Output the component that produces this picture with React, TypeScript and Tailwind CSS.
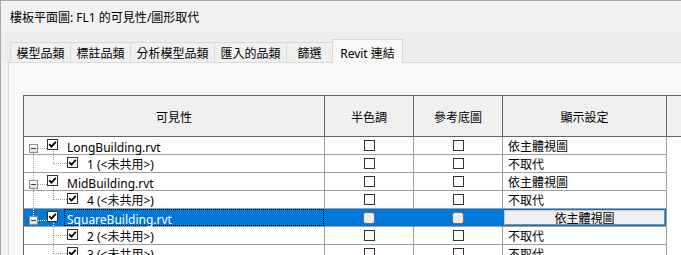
import React from 'react';

type Row = {
  kind: 'parent' | 'child';
  label: string;
  display: string;
  selected?: boolean;
  up?: boolean;
  down?: boolean;
  through?: boolean;
  last?: boolean;
};

const rows: Row[] = [
  { kind: 'parent', label: 'LongBuilding.rvt', display: '依主體視圖', down: true },
  { kind: 'child', label: '1 (<未共用>)', display: '不取代', through: true, last: true },
  { kind: 'parent', label: 'MidBuilding.rvt', display: '依主體視圖', up: true, down: true },
  { kind: 'child', label: '4 (<未共用>)', display: '不取代', through: true, last: true },
  { kind: 'parent', label: 'SquareBuilding.rvt', display: '依主體視圖', up: true, selected: true },
  { kind: 'child', label: '2 (<未共用>)', display: '不取代' },
  { kind: 'child', label: '3 (<未共用>)', display: '不取代' },
];

const tabs = [
  { label: '模型品類', w: 'w-[60px]' },
  { label: '標註品類', w: 'w-[60px]' },
  { label: '分析模型品類', w: 'w-[84px]' },
  { label: '匯入的品類', w: 'w-[72px]' },
  { label: '篩選', w: 'w-[46px]' },
];

const CJK_RUN = /([\u2E80-\u9FFF\uF900-\uFAFF\uFF00-\uFFEF]+)/;

// Latin runs in Noto Sans, CJK runs in Noto Sans CJK TC
const Txt: React.FC<{ s: string }> = ({ s }) => (
  <span className="whitespace-pre">
    {s
      .split(CJK_RUN)
      .filter(Boolean)
      .map((part, i) =>
        CJK_RUN.test(part) ? (
          <span key={i} className="font-['Noto_Sans_CJK_TC',sans-serif] text-[12px]">
            {part}
          </span>
        ) : (
          <span key={i} className="font-['Noto_Sans','Noto_Sans_CJK_TC',sans-serif] text-[12px]">
            {part}
          </span>
        )
      )}
  </span>
);

const CheckBox: React.FC<{ checked?: boolean }> = ({ checked }) => (
  <svg width="11" height="11" viewBox="0 0 11 11" className="shrink-0 block">
    <rect x="0.5" y="0.5" width="10" height="10" fill="#ffffff" stroke="#333333" />
    {checked && (
      <polyline points="2.2,5.2 4.4,7.6 8.8,2.8" fill="none" stroke="#000000" strokeWidth="1.8" />
    )}
  </svg>
);

const MinusBox: React.FC = () => (
  <svg width="9" height="9" viewBox="0 0 9 9" className="shrink-0 block">
    <defs>
      <linearGradient id="mb" x1="0" y1="0" x2="0" y2="1">
        <stop offset="0" stopColor="#ffffff" />
        <stop offset="1" stopColor="#dcdcdc" />
      </linearGradient>
    </defs>
    <rect x="0.5" y="0.5" width="8" height="8" fill="url(#mb)" stroke="#8e8e8e" />
    <line x1="2" y1="4.5" x2="7" y2="4.5" stroke="#2a3f5c" />
  </svg>
);

const TreeLines: React.FC<{ row: Row }> = ({ row }) => {
  const segs: [number, number, number, number][] = [];
  if (row.kind === 'parent') {
    if (row.up) segs.push([9.5, 0, 9.5, 7]);
    if (row.down) segs.push([9.5, 16, 9.5, 18]);
    segs.push([14, 11.5, 23, 11.5]);
    segs.push([29.5, 14, 29.5, 18]);
  } else {
    if (row.through) segs.push([9.5, 0, 9.5, 18]);
    segs.push([29.5, 0, 29.5, row.last ? 9 : 18]);
    segs.push([30, 8.5, 43, 8.5]);
  }
  const color = row.selected ? '#ffffff' : '#a0a0a0';
  return (
    <svg width="60" height="18" className="absolute left-0 top-0 pointer-events-none" shapeRendering="crispEdges">
      {segs.map(([x1, y1, x2, y2], i) => (
        <line key={i} x1={x1} y1={y1} x2={x2} y2={y2} stroke={color} strokeDasharray="1 1" />
      ))}
    </svg>
  );
};

const BodyRow: React.FC<{ row: Row }> = ({ row }) => {
  const sel = !!row.selected;
  const cellBg = sel ? 'bg-[#0078d7] border-r-[#0078d7]' : 'bg-white border-r-[#a0a0a0]';
  return (
    <div className="flex h-[18px] leading-[17px]">
      <div className={`relative w-[301px] flex items-start border-r border-b border-b-[#a0a0a0] ${cellBg} ${sel ? 'text-white' : 'text-black'}`}>
        <TreeLines row={row} />
        {row.kind === 'parent' ? (
          <>
            <div className="ml-[5px] mt-[7px] relative">
              <MinusBox />
            </div>
            <div className="ml-[9px] mt-[2px] relative">
              <CheckBox checked />
            </div>
            <div
              className={`ml-[6px] flex-1 self-stretch pl-[2px] border border-dotted whitespace-nowrap ${
                sel ? 'border-black' : 'border-transparent'
              }`}
            >
              <Txt s={row.label} />
            </div>
          </>
        ) : (
          <>
            <div className="ml-[43px] mt-[2px] relative">
              <CheckBox checked />
            </div>
            <div className="ml-[9px] whitespace-nowrap">
              <Txt s={row.label} />
            </div>
          </>
        )}
      </div>
      <div className={`w-[89px] flex justify-center items-start border-r border-b border-b-[#a0a0a0] ${cellBg}`}>
        {sel ? (
          <div className="mt-[3px] w-[12px] h-[12px] rounded-[3px] bg-[#ececec] border border-[#6e6e6e]" />
        ) : (
          <div className="mt-[3px]">
            <CheckBox />
          </div>
        )}
      </div>
      <div className={`w-[89px] flex justify-center items-start border-r border-b border-b-[#a0a0a0] ${cellBg}`}>
        {sel ? (
          <div className="mt-[3px] w-[12px] h-[12px] rounded-[3px] bg-[#ececec] border border-[#6e6e6e]" />
        ) : (
          <div className="mt-[3px]">
            <CheckBox />
          </div>
        )}
      </div>
      <div className={`w-[164px] border-r border-b border-b-[#a0a0a0] whitespace-nowrap ${sel ? 'bg-[#0078d7] border-r-[#a0a0a0]' : 'bg-white border-r-[#a0a0a0]'}`}>
        {sel ? (
          <div className="ml-[1px] mt-[1px] w-[161px] h-[15px] flex items-center justify-center bg-[#efefef] border border-[#c8c8c8] border-b-[#8a8a8a] border-r-[#8a8a8a] leading-[13px] text-black">
            <Txt s={row.display} />
          </div>
        ) : (
          <div className="pl-[5px] text-black">
            <Txt s={row.display} />
          </div>
        )}
      </div>
      <div className="flex-1 bg-white" />
    </div>
  );
};

const App: React.FC = () => {
  return (
    <div className="w-[681px] h-[255px] overflow-hidden bg-[#f2f2f2] border-l border-t border-[#a9a9a9] flex flex-col text-black">
      <div className="h-[30px] shrink-0 flex items-center pl-[9px] whitespace-nowrap">
        <Txt s="樓板平面圖: FL1 的可見性/圖形取代" />
      </div>

      <div className="h-[31px] shrink-0 bg-[#eeeeee] flex items-end pl-[9px]">
        {tabs.map((t) => (
          <div
            key={t.label}
            className={`${t.w} h-[20px] flex items-center justify-center border-l border-t border-[#dadada] bg-[#f0f0f0] leading-[17px] whitespace-nowrap`}
          >
            <Txt s={t.label} />
          </div>
        ))}
        <div className="relative z-10 -mb-px w-[71px] h-[24px] flex items-center justify-center pt-[2px] border-l border-t border-r border-[#d9d9d9] bg-[#f8f8f8] leading-[17px] whitespace-nowrap">
          <Txt s="Revit 連結" />
        </div>
      </div>

      <div className="flex-1 ml-[7px] border-l border-t border-[#d9d9d9] bg-[#f8f8f8] pt-[32px] pl-[14px] overflow-hidden">
        <div className="w-[700px] border-l border-t border-[#646464]">
          <div className="flex h-[41px] bg-[#f0f0f0] border-b border-[#646464] leading-[17px]">
            <div className="w-[301px] flex items-center justify-center border-r border-[#646464]">
              <Txt s="可見性" />
            </div>
            <div className="w-[89px] flex items-center justify-center border-r border-[#646464]">
              <Txt s="半色調" />
            </div>
            <div className="w-[89px] flex items-center justify-center border-r border-[#646464]">
              <Txt s="參考底圖" />
            </div>
            <div className="w-[164px] flex items-center justify-center border-r border-[#646464]">
              <Txt s="顯示設定" />
            </div>
            <div className="flex-1" />
          </div>
          {rows.map((r, i) => (
            <BodyRow key={i} row={r} />
          ))}
        </div>
      </div>
    </div>
  );
};

export default App;
